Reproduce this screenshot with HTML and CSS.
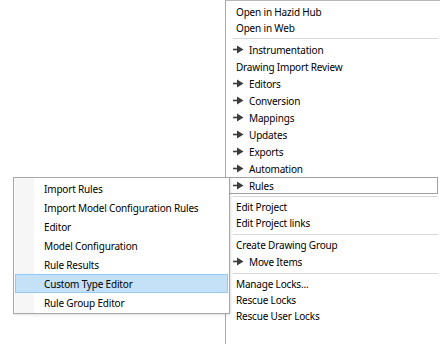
FILE: index.html
```html
<!DOCTYPE html>
<html>
<head>
<meta charset="utf-8">
<link rel="stylesheet" href="styles.css">
</head>
<body>
<div class="stage">
  <div class="menu">
    <div class="item h16">Open in Hazid Hub</div>
    <div class="item h16">Open in Web</div>
    <div class="sep"></div>
    <div class="item sub"><svg class="arr" viewBox="0 0 11 9"><path d="M0 4.5h5" stroke="#3c3c3c" stroke-width="1.6"/><path d="M4 0.5L10.5 4.5L4 8.5Z" fill="#3c3c3c"/></svg>Instrumentation</div>
    <div class="item">Drawing Import Review</div>
    <div class="item sub"><svg class="arr" viewBox="0 0 11 9"><path d="M0 4.5h5" stroke="#3c3c3c" stroke-width="1.6"/><path d="M4 0.5L10.5 4.5L4 8.5Z" fill="#3c3c3c"/></svg>Editors</div>
    <div class="item sub"><svg class="arr" viewBox="0 0 11 9"><path d="M0 4.5h5" stroke="#3c3c3c" stroke-width="1.6"/><path d="M4 0.5L10.5 4.5L4 8.5Z" fill="#3c3c3c"/></svg>Conversion</div>
    <div class="item sub"><svg class="arr" viewBox="0 0 11 9"><path d="M0 4.5h5" stroke="#3c3c3c" stroke-width="1.6"/><path d="M4 0.5L10.5 4.5L4 8.5Z" fill="#3c3c3c"/></svg>Mappings</div>
    <div class="item sub"><svg class="arr" viewBox="0 0 11 9"><path d="M0 4.5h5" stroke="#3c3c3c" stroke-width="1.6"/><path d="M4 0.5L10.5 4.5L4 8.5Z" fill="#3c3c3c"/></svg>Updates</div>
    <div class="item sub"><svg class="arr" viewBox="0 0 11 9"><path d="M0 4.5h5" stroke="#3c3c3c" stroke-width="1.6"/><path d="M4 0.5L10.5 4.5L4 8.5Z" fill="#3c3c3c"/></svg>Exports</div>
    <div class="item sub"><svg class="arr" viewBox="0 0 11 9"><path d="M0 4.5h5" stroke="#3c3c3c" stroke-width="1.6"/><path d="M4 0.5L10.5 4.5L4 8.5Z" fill="#3c3c3c"/></svg>Automation</div>
    <div class="item sub open"><svg class="arr" viewBox="0 0 11 9"><path d="M0 4.5h5" stroke="#3c3c3c" stroke-width="1.6"/><path d="M4 0.5L10.5 4.5L4 8.5Z" fill="#3c3c3c"/></svg>Rules</div>
    <div class="sep"></div>
    <div class="item h16">Edit Project</div>
    <div class="item h16">Edit Project links</div>
    <div class="sep wide"></div>
    <div class="item h16">Create Drawing Group</div>
    <div class="item sub"><svg class="arr" viewBox="0 0 11 9"><path d="M0 4.5h5" stroke="#3c3c3c" stroke-width="1.6"/><path d="M4 0.5L10.5 4.5L4 8.5Z" fill="#3c3c3c"/></svg>Move Items</div>
    <div class="sep wide"></div>
    <div class="item h16">Manage Locks...</div>
    <div class="item h16">Rescue Locks</div>
    <div class="item h16">Rescue User Locks</div>
  </div>

  <div class="submenu">
    <div class="gutter"></div>
    <div class="sitem">Import Rules</div>
    <div class="sitem">Import Model Configuration Rules</div>
    <div class="sitem">Editor</div>
    <div class="sitem">Model Configuration</div>
    <div class="sitem">Rule Results</div>
    <div class="sitem hot">Custom Type Editor</div>
    <div class="sitem">Rule Group Editor</div>
  </div>
</div>
</body>
</html>
```

FILE: styles.css
```css
html, body {
  margin: 0;
  padding: 0;
  background: #ffffff;
}
body {
  font-family: "Noto Sans", "Open Sans", sans-serif;
  font-size: 10px;
  letter-spacing: -0.18px;
  color: #000;
}
.stage {
  position: relative;
  width: 440px;
  height: 344px;
  overflow: hidden;
}
.menu {
  position: absolute;
  left: 225px;
  top: 0;
  width: 215px;
  height: 344px;
  box-sizing: border-box;
  border-left: 1px solid #a8a8a8;
  border-top: 1px solid #b8b8b8;
  background: #fff;
  padding: 3px 2px 0 2px;
}
.item {
  height: 17px;
  padding-left: 8px;
  white-space: nowrap;
  display: flex;
  align-items: center;
  box-sizing: border-box;
}
.item.h16 {
  height: 16px;
}
.item.sub {
  padding-left: 5px;
}
.arr {
  width: 11px;
  height: 9px;
  margin-right: 5px;
  flex: none;
}
.item.open {
  border: 1px solid #a0a0a0;
  padding-left: 4px;
}
.sep {
  height: 5px;
  margin: 0 0 0 5px;
  border-bottom: 1px solid #d7d7d7;
  box-sizing: border-box;
  position: relative;
  top: -2px;
}
.sep.wide {
  height: 6px;
}
.submenu {
  position: absolute;
  left: 13px;
  top: 177px;
  width: 217px;
  box-sizing: border-box;
  border: 1px solid #a8a8a8;
  background: #fff;
  padding: 1px;
  box-shadow: 1px 1px 2px rgba(0,0,0,0.12);
}
.gutter {
  position: absolute;
  left: 1px;
  top: 0;
  bottom: 0;
  width: 19px;
  background: #f6f6f6;
}
.sitem {
  position: relative;
  height: 19px;
  padding-left: 29px;
  white-space: nowrap;
  box-sizing: border-box;
  display: flex;
  align-items: center;
}
.sitem.hot {
  background: #c5e1f7;
  border: 1px solid #90c8f6;
  padding-left: 28px;
}
```
